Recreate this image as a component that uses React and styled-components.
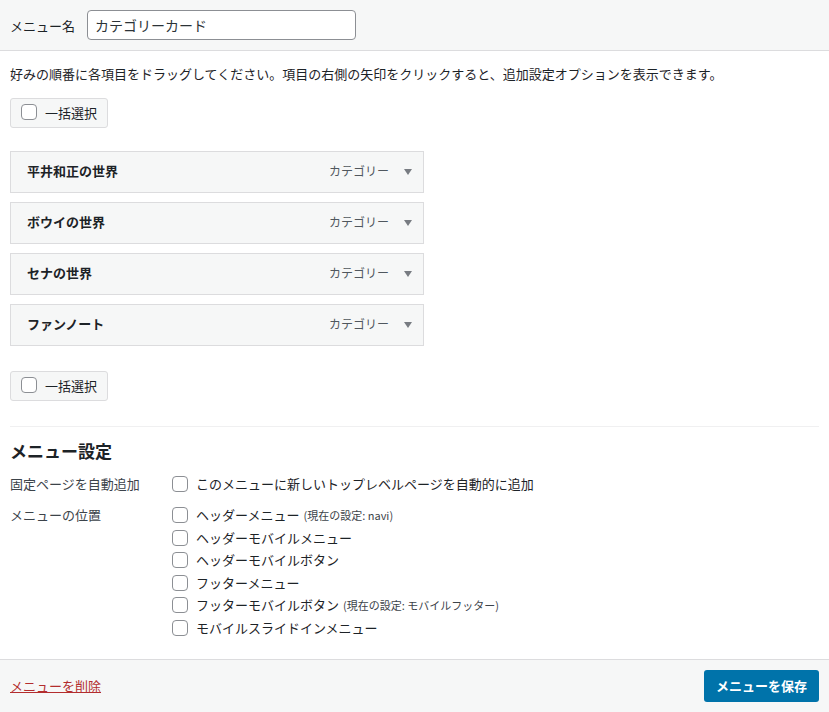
import React from "react";
import styled, { createGlobalStyle } from "styled-components";

const GlobalStyle = createGlobalStyle`
  html, body {
    margin: 0;
    padding: 0;
    background: #fff;
    font-family: "Noto Sans CJK JP", "Noto Sans", sans-serif;
    font-size: 13px;
    color: #1d2327;
  }
  * { box-sizing: border-box; }
`;

const Page = styled.div`
  width: 829px;
  height: 712px;
  display: flex;
  flex-direction: column;
  background: #fff;
`;

const Header = styled.div`
  height: 51px;
  background: #f6f7f7;
  border-bottom: 1px solid #dcdcde;
  display: flex;
  align-items: center;
  padding: 0 10px;
  gap: 12px;
  flex-shrink: 0;
`;

const Label = styled.label`
  font-size: 13px;
  color: #1d2327;
`;

const NameInput = styled.input`
  width: 269px;
  height: 30px;
  border: 1px solid #8c8f94;
  border-radius: 4px;
  padding: 0 7px;
  font-family: inherit;
  font-size: 14px;
  color: #2c3338;
  background: #fff;
  margin-top: -1px;
`;

const Body = styled.div`
  flex: 1;
  padding: 12px 10px 0;
  display: flex;
  flex-direction: column;
`;

const Description = styled.p`
  margin: 0;
  line-height: 22px;
  font-size: 13px;
`;

const BulkButton = styled.label`
  display: inline-flex;
  align-items: center;
  gap: 8px;
  align-self: flex-start;
  height: 30px;
  padding: 0 10px 2px 10px;
  border: 1px solid #dcdcde;
  border-radius: 3px;
  background: #f6f7f7;
  font-size: 13px;
  margin-top: ${(p) => p.$top}px;
`;

const Box = styled.span`
  display: inline-block;
  width: 16px;
  height: 16px;
  border: 1px solid #8c8f94;
  border-radius: 4px;
  background: #fff;
  flex-shrink: 0;
`;

const ItemList = styled.ul`
  list-style: none;
  margin: 23px 0 0;
  padding: 0;
  display: flex;
  flex-direction: column;
  gap: 9px;
  width: 414px;
`;

const Item = styled.li`
  height: 42px;
  border: 1px solid #dcdcde;
  background: #f6f7f7;
  display: flex;
  align-items: center;
  padding: 0 11px 3px 16px;
`;

const ItemTitle = styled.span`
  font-weight: 700;
  font-size: 13px;
  flex: 1;
  color: #1d2327;
`;

const ItemType = styled.span`
  font-size: 12px;
  color: #50575e;
  margin-right: 15px;
`;

const Arrow = styled.span`
  width: 0;
  height: 0;
  border-left: 4.5px solid transparent;
  border-right: 4.5px solid transparent;
  border-top: 6px solid #787c82;
  margin-top: 3px;
`;

const Divider = styled.hr`
  border: 0;
  border-top: 1px solid #f0f0f1;
  margin: 25px 0 0;
  width: 809px;
`;

const SettingsTitle = styled.h3`
  margin: 12px 0 0;
  font-size: 17px;
  font-weight: 700;
  line-height: 24px;
`;

const SettingsGrid = styled.div`
  display: grid;
  grid-template-columns: 162px 1fr;
  row-gap: 9px;
  margin-top: 10px;
`;

const FieldName = styled.div`
  font-size: 13px;
  color: #3c434a;
  line-height: 22px;
`;

const Options = styled.div`
  display: flex;
  flex-direction: column;
  gap: ${(p) => p.$gap}px;
`;

const Option = styled.label`
  display: flex;
  align-items: center;
  gap: 8px;
  font-size: 13px;
  line-height: 22px;
  height: 22px;
  color: #1d2327;
`;

const Note = styled.span`
  font-size: 11px;
  color: #3c434a;
  margin-left: 4px;
`;

const Footer = styled.div`
  height: 53px;
  border-top: 1px solid #dcdcde;
  background: #f6f7f7;
  display: flex;
  align-items: center;
  justify-content: space-between;
  padding: 0 10px;
  flex-shrink: 0;
`;

const DeleteLink = styled.a`
  color: #b32d2e;
  text-decoration: underline;
  font-size: 13px;
  margin-top: -2px;
`;

const SaveButton = styled.button`
  height: 32px;
  padding: 0 12px;
  border: 0;
  border-radius: 3px;
  background: #0073aa;
  color: #fff;
  font-family: inherit;
  font-size: 13px;
  font-weight: 700;
  margin-top: -1px;
`;

const items = ["平井和正の世界", "ボウイの世界", "セナの世界", "ファンノート"];

const locations = [
  { name: "ヘッダーメニュー", note: "(現在の設定: navi)" },
  { name: "ヘッダーモバイルメニュー" },
  { name: "ヘッダーモバイルボタン" },
  { name: "フッターメニュー" },
  { name: "フッターモバイルボタン", note: "(現在の設定: モバイルフッター)" },
  { name: "モバイルスライドインメニュー" },
];

export default function App() {
  return (
    <>
      <GlobalStyle />
      <Page>
        <Header>
          <Label>メニュー名</Label>
          <NameInput defaultValue="カテゴリーカード" />
        </Header>
        <Body>
          <Description>
            好みの順番に各項目をドラッグしてください。項目の右側の矢印をクリックすると、追加設定オプションを表示できます。
          </Description>
          <BulkButton $top={13}>
            <Box />
            一括選択
          </BulkButton>
          <ItemList>
            {items.map((t) => (
              <Item key={t}>
                <ItemTitle>{t}</ItemTitle>
                <ItemType>カテゴリー</ItemType>
                <Arrow />
              </Item>
            ))}
          </ItemList>
          <BulkButton $top={25}>
            <Box />
            一括選択
          </BulkButton>
          <Divider />
          <SettingsTitle>メニュー設定</SettingsTitle>
          <SettingsGrid>
            <FieldName>固定ページを自動追加</FieldName>
            <Options $gap={0}>
              <Option>
                <Box />
                このメニューに新しいトップレベルページを自動的に追加
              </Option>
            </Options>
            <FieldName>メニューの位置</FieldName>
            <Options $gap={0.6}>
              {locations.map((l) => (
                <Option key={l.name}>
                  <Box />
                  <span>
                    {l.name}
                    {l.note && <Note>{l.note}</Note>}
                  </span>
                </Option>
              ))}
            </Options>
          </SettingsGrid>
        </Body>
        <Footer>
          <DeleteLink href="#">メニューを削除</DeleteLink>
          <SaveButton>メニューを保存</SaveButton>
        </Footer>
      </Page>
    </>
  );
}
